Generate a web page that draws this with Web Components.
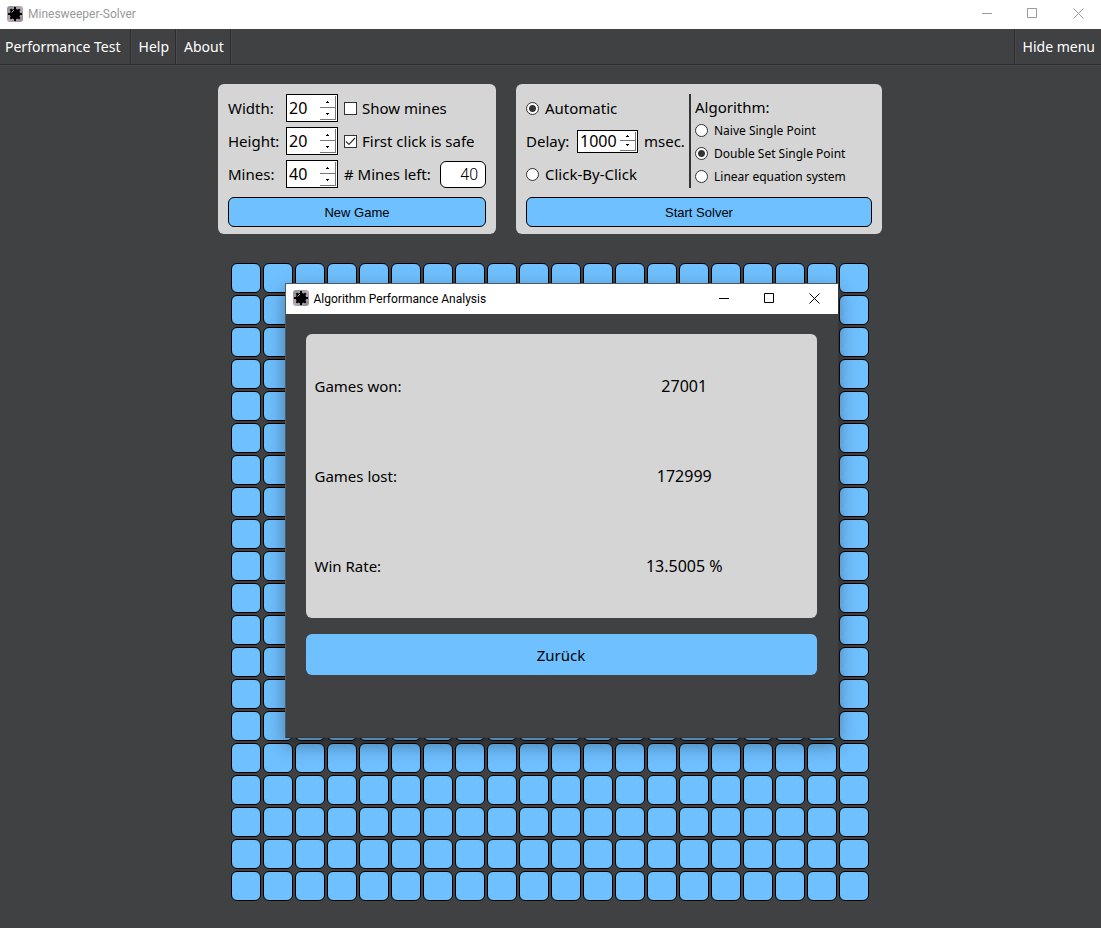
<!DOCTYPE html>
<html lang="en">
<head>
<meta charset="utf-8">
<title>Minesweeper-Solver</title>
<style>
html, body { margin: 0; min-height: 100%; background: #404142; }
body { font: 15px/20px "Noto Sans", "Open Sans", sans-serif; color: #000; }
</style>
</head>
<body>
<solver-app></solver-app>
<script>
const define = (name, html, setup) => customElements.define(name, class extends HTMLElement {
  constructor() {
    super();
    this.attachShadow({ mode: 'open' });
  }
  connectedCallback() {
    if (this.shadowRoot.childNodes.length) return;
    const t = document.createElement('template');
    t.innerHTML = typeof html === 'function' ? html(this) : html;
    this.shadowRoot.append(t.content.cloneNode(true));
    if (setup) setup(this, this.shadowRoot);
  }
});

const base = `*{box-sizing:border-box} button,input{font:inherit;color:inherit;margin:0}`;

const panel = `
  :host { display: block; box-sizing: border-box; background: #d5d5d5; border-radius: 6px; padding: 10px 10px 7px; }
  .go { display: block; width: 100%; height: 30px; margin-top: 9px; padding: 2px 0 0; border: 1px solid #000; border-radius: 6px;
        background: #6fc0ff; font: 13px/16px "Liberation Sans", Arial, sans-serif; }`;

const choice = `
  .choice { display: flex; align-items: center; gap: 5px; white-space: nowrap; }
  .choice input { appearance: none; flex: none; width: 13px; height: 13px; border: 1px solid #333; background: #fff; }
  .choice input[type=radio] { border-radius: 50%; }
  .choice input[type=radio]:checked { background: radial-gradient(circle, #333 0 3px, #fff 4px); }
  .choice input[type=checkbox]:checked {
    background: #fff url("data:image/svg+xml,%3Csvg xmlns='http://www.w3.org/2000/svg' viewBox='0 0 11 11'%3E%3Cpath d='M1 5.5 4 8.5 10 2' fill='none' stroke='%23333' stroke-width='1.2'/%3E%3C/svg%3E"); }`;

define('mine-icon', `<style>:host{display:block;width:16px;height:16px;flex:none} svg{display:block}</style>
<svg width="16" height="16" viewBox="0 0 16 16" aria-hidden="true">
  <defs><linearGradient id="g" x1="0" y1="0" x2="1" y2="1"><stop offset="0" stop-color="#8d8d93"/><stop offset=".5" stop-color="#b9a9b8"/><stop offset="1" stop-color="#8f8a92"/></linearGradient></defs>
  <rect width="16" height="16" rx="3" fill="url(#g)"/>
  <circle cx="8" cy="8" r="5.2"/>
  <path d="M7 1h2v14H7zM1 7h14v2H1zM2.600 4l1.500-1.500 9.400 9.400-1.500 1.500zM12 2.500 13.500 4 4.100 13.400 2.600 11.900z"/>
  <path d="M4.600 6.500 7 4" stroke="#bbb" stroke-width="1"/>
</svg>`);

define('title-bar', el => `<style>${base}
  :host { display: flex; align-items: center; box-sizing: border-box; height: var(--bar-height, 29px); padding: 0 0 2px 7px; background: #fff; color: #000; font: 12px/16px Roboto, "Open Sans", sans-serif; }
  :host([inactive]) { color: #999; }
  .name { flex: 1; margin-left: 5px; padding-top: 1px; }
  button { width: 45px; height: 26px; padding: 0; border: 0; background: none; display: grid; place-items: center; }
  button:last-child { width: 46px; }
  svg { display: block; fill: none; stroke: currentColor; }
</style>
<mine-icon></mine-icon><span class="name"><slot></slot></span>
<button aria-label="Minimize"><svg width="11" height="11"><path d="M0 5.500h10"/></svg></button>
<button aria-label="Maximize"><svg width="11" height="11"><path d="M.5.5h9v9h-9z"/></svg></button>
<button aria-label="Close"><svg width="11" height="11"><path d="M.5.5l10 10M10.500.5l-10 10"/></svg></button>`);

define('menu-strip', `<style>${base}
  :host { display: block; font-size: 14px; }
  nav { display: flex; height: 37px; border-bottom: 1px solid #4a4b4c; box-shadow: inset 0 -1px #2b2c2d; }
  button { height: 35px; padding: 0 6px 0 8px; border: 0; border-right: 1px solid #2b2c2d; background: none; color: #fff; white-space: nowrap; box-shadow: 1px 0 #4a4b4c; }
  button:first-child { padding: 0 9px 0 5px; }
  button:last-child { margin-left: auto; border-right: 0; border-left: 1px solid #2b2c2d; box-shadow: inset 1px 0 #4a4b4c; }
</style>
<nav><button>Performance Test</button><button>Help</button><button>About</button><button>Hide menu</button></nav>`);

define('spin-box', el => `<style>${base}
  :host { display: flex; align-items: center; }
  label { width: var(--label-width); white-space: nowrap; }
  .box { display: flex; width: var(--box-width, 52px); height: var(--box-height, 28px); border: 1px solid #000; background: #fff; padding-right: 1px; }
  input { flex: 1; width: 0; min-width: 0; border: 0; padding: 0 0 0 2px; background: none; outline: 0; font-size: 16px; }
  .steps { display: flex; flex-direction: column; width: 16px; padding: 1px 0; }
  .steps button { flex: 1; padding: 0; border: 0; border-right: 1px solid #777; border-bottom: 1px solid #777; background: #fff; display: grid; place-items: center; min-height: 0; }
  svg { display: block; }
</style>
<label for="n"><slot></slot></label>
<span class="box"><input id="n" type="text" inputmode="numeric" value="${el.getAttribute('value')}">
<span class="steps"><button aria-label="Increase"><svg width="3" height="2"><path d="M1 0h1v1h1v1H0V1h1z"/></svg></button><button aria-label="Decrease"><svg width="3" height="2"><path d="M0 0h3v1H2v1H1V1H0z"/></svg></button></span></span>`,
(el, root) => {
  const n = root.getElementById('n');
  root.querySelectorAll('button').forEach((b, i) => b.addEventListener('click', () => { n.value = Math.max(0, +n.value + (i ? -1 : 1)); }));
});

define('game-settings', `<style>${base}${panel}${choice}
  :host { width: 278px; }
  .rows { display: grid; grid-template-columns: auto 1fr; grid-auto-rows: 28px; gap: 5px 6px; --label-width: 58px; }
  .left { display: flex; align-items: center; justify-content: space-between; white-space: nowrap; }
  output { width: 46px; height: 27px; border: 1px solid #000; border-radius: 6px; background: #fff; padding-right: 7px; text-align: right; font: 300 16px/25px Roboto, sans-serif; }
</style>
<div class="rows">
  <spin-box value="20">Width:</spin-box>
  <label class="choice"><input type="checkbox">Show mines</label>
  <spin-box value="20">Height:</spin-box>
  <label class="choice"><input type="checkbox" checked>First click is safe</label>
  <spin-box value="40">Mines:</spin-box>
  <div class="left"><label for="left"># Mines left:</label><output id="left">40</output></div>
</div>
<button class="go">New Game</button>`);

define('solver-settings', `<style>${base}${panel}${choice}
  :host { width: 366px; }
  .cols { display: flex; height: 94px; }
  .mode { display: grid; grid-template-rows: repeat(3, 28px); row-gap: 5px; width: 163px; }
  .delay { display: flex; align-items: center; gap: 6px; --label-width: 51px; --box-width: 61px; --box-height: 23px; }
  .algo { flex: 1; border-left: 2px solid #333; padding-left: 4px; display: grid; grid-template-rows: 25px repeat(3, 23px); align-items: center; }
  .choice { gap: 6px; }
  .algo .choice { font-size: 12px; }
</style>
<div class="cols">
  <div class="mode">
    <label class="choice"><input type="radio" name="mode" checked>Automatic</label>
    <div class="delay"><spin-box value="1000">Delay:</spin-box><span>msec.</span></div>
    <label class="choice"><input type="radio" name="mode">Click-By-Click</label>
  </div>
  <div class="algo" role="radiogroup" aria-labelledby="algo">
    <span id="algo">Algorithm:</span>
    <label class="choice"><input type="radio" name="algo">Naive Single Point</label>
    <label class="choice"><input type="radio" name="algo" checked>Double Set Single Point</label>
    <label class="choice"><input type="radio" name="algo">Linear equation system</label>
  </div>
</div>
<button class="go">Start Solver</button>`);

define('mine-field', `<style>${base}
  :host { display: grid; grid-template-columns: repeat(20, 30px); grid-auto-rows: 30px; gap: 2px; }
  button { padding: 0; border: 1px solid #000; border-radius: 6px; background: #6fc0ff; }
</style>`, (el, root) => {
  for (let i = 0; i < 400; i++) root.append(document.createElement('button'));
});

define('result-dialog', `<style>${base}
  :host { display: block; box-sizing: border-box; width: 553px; border: 1px solid #4c5a66; border-right-width: 0; border-bottom-color: #38393a; background: #404142; box-shadow: 0 7px 18px rgba(0,0,0,.38); --bar-height: 30px; }
  .body { padding: 20px 21px 62px 20px; }
  .card { background: #d5d5d5; border-radius: 6px; padding: 7px 9px; }
  table { width: 100%; border-collapse: collapse; table-layout: fixed; }
  th, td { height: 90px; padding: 0; text-align: center; font-weight: normal; }
  th { text-align: left; }
  td { font-size: 16px; }
  .back { display: block; width: 100%; height: 41px; margin-top: 16px; border: 0; border-radius: 6px; background: #6fc0ff; }
</style>
<title-bar>Algorithm Performance Analysis</title-bar>
<div class="body">
  <div class="card"><table>
    <tr><th scope="row">Games won:</th><td>27001</td></tr>
    <tr><th scope="row">Games lost:</th><td>172999</td></tr>
    <tr><th scope="row">Win Rate:</th><td>13.5005 %</td></tr>
  </table></div>
  <button class="back">Zurück</button>
</div>`);

define('solver-app', `<style>
  :host { display: block; position: relative; }
  main { display: flex; flex-direction: column; align-items: center; padding: 18px 1px 27px 0; }
  .panels { display: flex; gap: 20px; margin-bottom: 29px; }
  result-dialog { position: absolute; top: 283px; left: calc(50% - 266px); }
</style>
<title-bar inactive>Minesweeper-Solver</title-bar>
<menu-strip></menu-strip>
<main>
  <div class="panels"><game-settings></game-settings><solver-settings></solver-settings></div>
  <mine-field></mine-field>
</main>
<result-dialog role="dialog" aria-label="Algorithm Performance Analysis"></result-dialog>`);
</script>
</body>
</html>
